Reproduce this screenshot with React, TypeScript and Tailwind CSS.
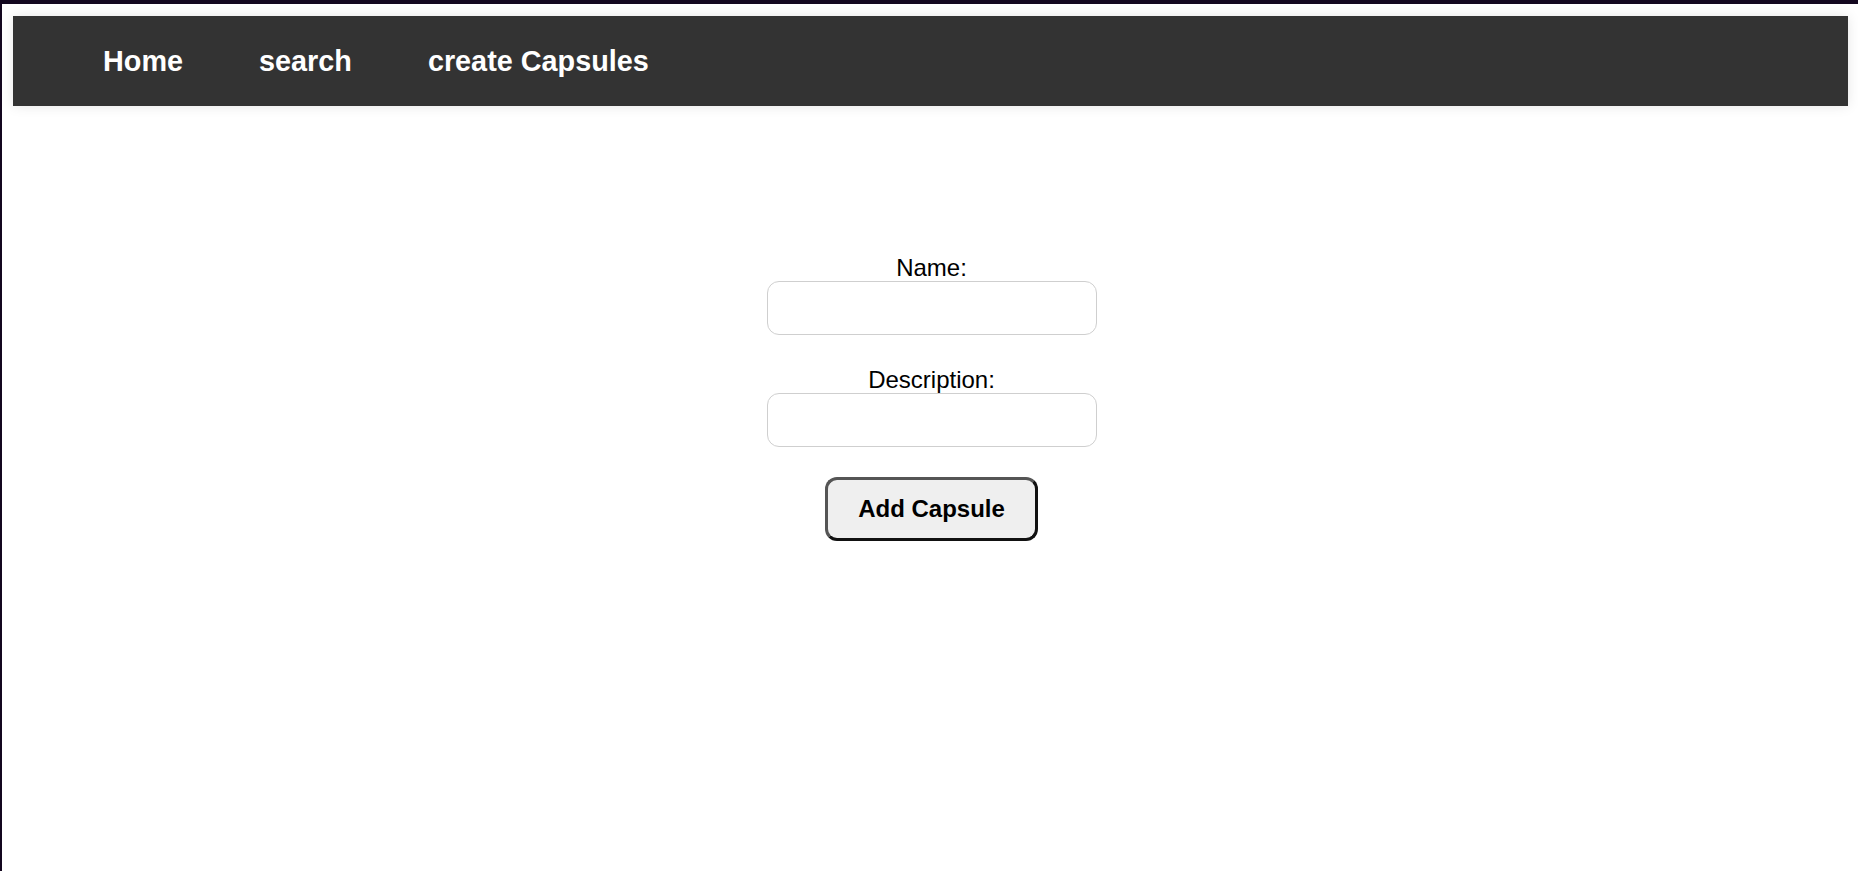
export default function App() {
  const links = ["Home", "search", "create Capsules"];

  return (
    <div
      className="min-h-[871px] bg-white border-t-4 border-l-2 border-[#13071f]"
      style={{ fontFamily: '"Liberation Sans", Arial, sans-serif' }}
    >
      <nav className="mt-3 ml-[11px] mr-[10px] h-[90px] bg-[#333333] flex items-center pl-[52px] shadow-[0_0_12px_rgba(0,0,0,0.1)]">
        {links.map((l) => (
          <a
            key={l}
            href="#"
            className="px-[38px] text-white font-bold text-[28.8px] leading-[33px] no-underline"
          >
            {l}
          </a>
        ))}
      </nav>

      <form
        className="mt-[148px] pl-[3px] flex flex-col items-center"
        onSubmit={(e) => e.preventDefault()}
      >
        <div className="flex flex-col items-center">
          <label className="text-[24px] leading-[27px] text-black">Name:</label>
          <input
            type="text"
            className="w-[330px] h-[54px] border border-[#cfcfcf] rounded-[12px] px-3 text-[20px] outline-none"
          />
        </div>
        <div className="mt-[31px] flex flex-col items-center">
          <label className="text-[24px] leading-[27px] text-black">
            Description:
          </label>
          <input
            type="text"
            className="w-[330px] h-[54px] border border-[#cfcfcf] rounded-[12px] px-3 text-[20px] outline-none"
          />
        </div>
        <button
          type="submit"
          className="mt-[30px] w-[213px] h-[64px] bg-[#efefef] border-[3px] border-t-[#555555] border-l-[#555555] border-r-[#111111] border-b-[#111111] rounded-[12px] text-[24px] font-bold text-black"
        >
          Add Capsule
        </button>
      </form>
    </div>
  );
}
